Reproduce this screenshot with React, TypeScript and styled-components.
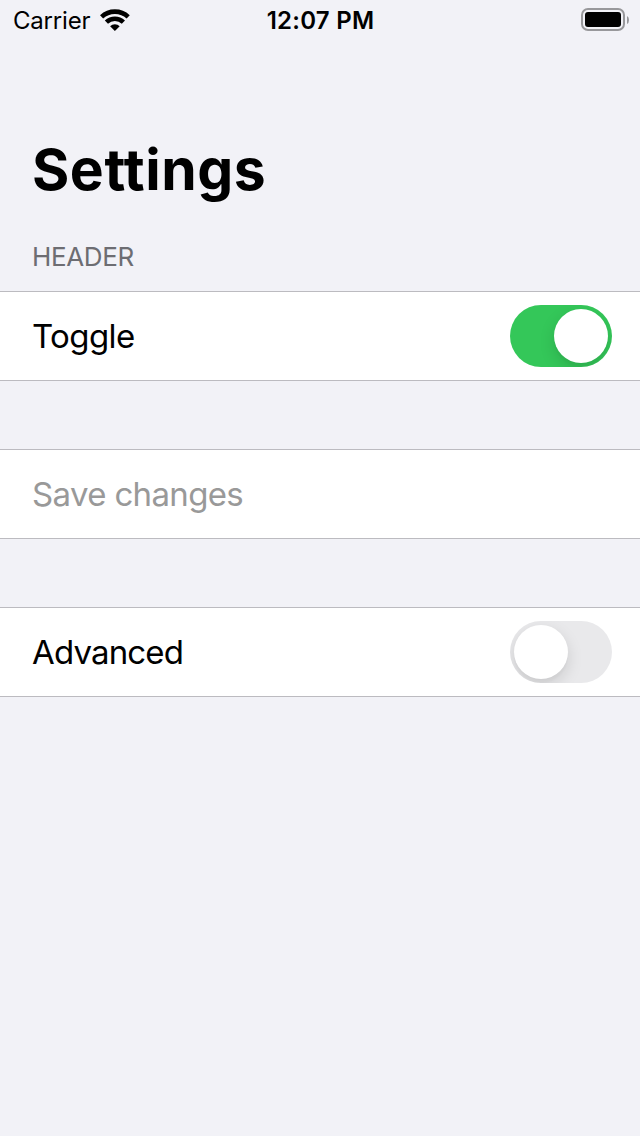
import React, { useState } from 'react';
import styled, { createGlobalStyle } from 'styled-components';

const GlobalStyle = createGlobalStyle`
  * { box-sizing: border-box; }
  body { margin: 0; background: #f2f2f7; font-family: Inter, "Liberation Sans", sans-serif; color: #000; }
`;

const Screen = styled.main`
  display: flex;
  flex-direction: column;
  min-height: 1136px;
  width: 640px;
  background: #f2f2f7;
`;

const StatusBar = styled.header`
  display: grid;
  grid-template-columns: 1fr auto 1fr;
  align-items: center;
  height: 40px;
  padding: 0 11px 0 13px;
`;

const Carrier = styled.div`
  display: flex;
  align-items: center;
  gap: 10px;
  font-size: 24px;
  line-height: 38px;
  letter-spacing: -0.2px;
`;

const CarrierName = styled.span`
  padding-top: 2px;
`;

const Clock = styled.time`
  padding-top: 2px;
  font-size: 24px;
  font-weight: 600;
  line-height: 38px;
  letter-spacing: 0.25px;
  margin-left: -1px;
`;

const Battery = styled.svg`
  justify-self: end;
`;

const Title = styled.h1`
  margin: 90px 0 0;
  padding: 0 32px;
  font-size: 57px;
  font-weight: 700;
  line-height: 80px;
  letter-spacing: 0.55px;
`;

const SectionHeader = styled.h2`
  margin: 31px 0 18px;
  padding: 0 32px;
  font-size: 26px;
  font-weight: 400;
  line-height: 32px;
  letter-spacing: -0.35px;
  color: #6d6d72;
`;

const Row = styled.section`
  display: flex;
  align-items: center;
  justify-content: space-between;
  height: 90px;
  padding: 0 28px 0 32px;
  margin-bottom: 68px;
  background: #fff;
  border: solid #bcbbc0;
  border-width: 1px 0;
`;

const Label = styled.span<{ $muted?: boolean; $tracking?: number }>`
  font-size: 33px;
  line-height: 44px;
  letter-spacing: ${p => p.$tracking ?? -0.6}px;
  color: ${p => (p.$muted ? '#999' : '#000')};
`;

const Switch = styled.button<{ $on: boolean }>`
  display: flex;
  justify-content: ${p => (p.$on ? 'flex-end' : 'flex-start')};
  width: 102px;
  height: 62px;
  padding: 4px;
  border: 0;
  border-radius: 31px;
  overflow: hidden;
  background: ${p => (p.$on ? '#34c759' : '#e9e9eb')};
`;

const Knob = styled.span`
  width: 54px;
  height: 54px;
  border-radius: 50%;
  background: #fff;
  box-shadow: 0 6px 16px rgba(0, 0, 0, 0.13), 0 4px 2px rgba(0, 0, 0, 0.02);
`;

function Toggle({ initial, label }: { initial: boolean; label: string }) {
  const [on, setOn] = useState(initial);
  return (
    <Switch $on={on} role="switch" aria-checked={on} aria-label={label} onClick={() => setOn(!on)}>
      <Knob />
    </Switch>
  );
}

export default function App() {
  return (
    <>
      <GlobalStyle />
      <Screen>
        <StatusBar>
          <Carrier>
            <CarrierName>Carrier</CarrierName>
            <svg width="30" height="22" viewBox="0 0 30 22" fill="none" stroke="#000" strokeWidth="4.6">
              <path d="M1.6 7.9A19.5 19.5 0 0 1 28.2 7.9" />
              <path d="M6.4 13.2A12.3 12.3 0 0 1 23.4 13.2" />
              <path d="M14.9 22L10.1 17.2A6.8 6.8 0 0 1 19.7 17.2Z" fill="#000" stroke="none" />
            </svg>
          </Carrier>
          <Clock>12:07 PM</Clock>
          <Battery width="48" height="24" viewBox="0 0 48 24">
            <rect x="1" y="1" width="42" height="21" rx="6" fill="none" stroke="#98989b" strokeWidth="2" />
            <rect x="4" y="4" width="36" height="15" rx="3" />
            <path d="M46 8Q48 9 48 12T46 16Z" fill="#98989b" />
          </Battery>
        </StatusBar>
        <Title>Settings</Title>
        <SectionHeader>HEADER</SectionHeader>
        <Row>
          <Label>Toggle</Label>
          <Toggle initial label="Toggle" />
        </Row>
        <Row>
          <Label $muted $tracking={-0.65}>Save changes</Label>
        </Row>
        <Row>
          <Label $tracking={-0.85}>Advanced</Label>
          <Toggle initial={false} label="Advanced" />
        </Row>
      </Screen>
    </>
  );
}
